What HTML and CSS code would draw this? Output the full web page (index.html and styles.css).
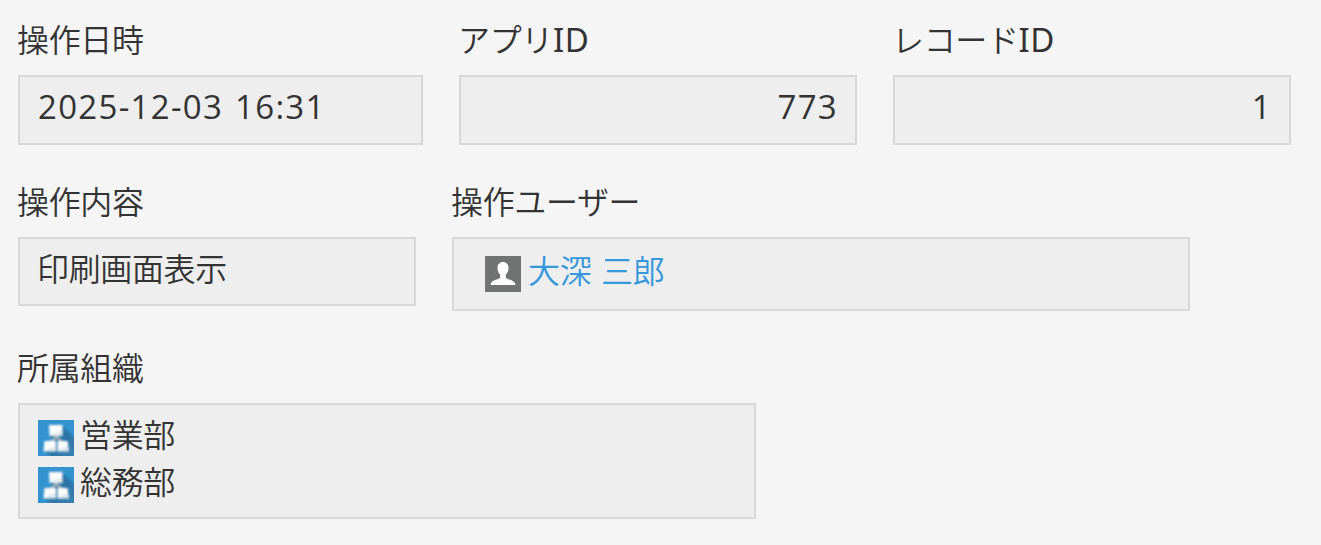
FILE: index.html
```
<!DOCTYPE html>
<html lang="ja">
<head>
  <meta charset="UTF-8">
  <meta name="viewport" content="width=device-width, initial-scale=1">
  <title>操作ログ</title>
  <link rel="stylesheet" href="styles.css">
</head>
<body>
  <svg class="defs" width="0" height="0">
    <defs>
      <linearGradient id="shade" x1="0" y1="0" x2="1" y2="1">
        <stop offset="0" stop-color="#1f6597"/>
        <stop offset="1" stop-color="#3a82b4"/>
      </linearGradient>
      <filter id="soften"><feGaussianBlur stdDeviation="0.8"/></filter>
      <symbol id="org" viewBox="0 0 36 36">
        <rect width="36" height="36" fill="#3293cf"/>
        <path d="M24 6L38 19V38H14L7 31L17 21L12 15Z" fill="url(#shade)" filter="url(#soften)"/>
        <g filter="url(#soften)">
          <path d="M17.500 15V18L12 22M18.500 17L24 22" fill="none" stroke="#a5b0b5" stroke-width="2.500"/>
          <path d="M11 5H24.500V16H11.500Z" fill="#fbfdfd"/>
          <path d="M6.500 21H18V31.500H5.500Z" fill="#fbfdfd"/>
          <path d="M19.500 21H29.500L31 31.500H19.500Z" fill="#fbfdfd"/>
          <path d="M14 14L24 11V15.500H14ZM9 29L17 26V31H9ZM22 29L30 26V31H22Z" fill="#e0e8ec"/>
        </g>
      </symbol>
    </defs>
  </svg>

  <div class="record">
    <div class="row">
      <div class="field datetime">
        <div class="label">操作日時</div>
        <div class="value"><span class="num">2025-12-03 16:31</span></div>
      </div>
      <div class="field">
        <div class="label">アプリ<span class="latin">ID</span></div>
        <div class="value right"><span class="num">773</span></div>
      </div>
      <div class="field">
        <div class="label">レコード<span class="latin">ID</span></div>
        <div class="value right"><span class="num">1</span></div>
      </div>
    </div>

    <div class="row">
      <div class="field">
        <div class="label">操作内容</div>
        <div class="value text">印刷画面表示</div>
      </div>
      <div class="field wide">
        <div class="label">操作ユーザー</div>
        <div class="value user">
          <svg class="icon" viewBox="0 0 36 36">
            <rect width="36" height="36" fill="#707372"/>
            <path d="M18 6C21.500 6 23.800 8.800 23.500 12.500C23.300 15.500 22.200 17.300 20.800 18.700V21.500C22 23.800 30 23.500 30.500 29H5.500C6 23.500 14 23.800 15.200 21.500V18.700C13.800 17.300 12.700 15.500 12.500 12.500C12.200 8.800 14.500 6 18 6Z" fill="#fff"/>
          </svg>
          <a class="user-name">大深 三郎</a>
        </div>
      </div>
    </div>

    <div class="row">
      <div class="field wide">
        <div class="label">所属組織</div>
        <div class="value orgs">
          <div class="org"><svg class="icon"><use href="#org"/></svg><span>営業部</span></div>
          <div class="org"><svg class="icon"><use href="#org"/></svg><span>総務部</span></div>
        </div>
      </div>
    </div>
  </div>
</body>
</html>
```
FILE: styles.css
```
* {
  box-sizing: border-box;
}

body {
  margin: 0;
  background: #f5f5f5;
  color: #333;
  font-family: "Noto Sans CJK JP", sans-serif;
  font-size: 32px;
  font-weight: 350;
  letter-spacing: -0.35px;
}

.defs {
  position: absolute;
}

.record {
  display: flex;
  flex-direction: column;
  gap: 33px;
  padding: 16px 18px 26px;
}

.row {
  display: flex;
  align-items: flex-start;
  gap: 36px;
}

.field {
  width: 398px;
}

.field.datetime {
  width: 405px;
}

.field.wide {
  width: 738px;
}

.label {
  height: 48px;
  line-height: 44px;
  margin-bottom: 11px;
  margin-left: -1px;
  white-space: nowrap;
}

.value {
  height: 70px;
  padding: 0 18px;
  border: 2px solid #d8d8d8;
  background: #eee;
  line-height: 57px;
  white-space: nowrap;
}

.value.right {
  padding-right: 17px;
  text-align: right;
}

.value.text {
  height: 69px;
  padding-left: 17px;
}

.latin,
.num {
  font-size: 33px;
  font-weight: 400;
  line-height: 1;
}

.latin {
  font-family: "Noto Sans", sans-serif;
  letter-spacing: 0.5px;
}

.num {
  font-family: "Open Sans", sans-serif;
  letter-spacing: 1.3px;
  word-spacing: 2px;
}

.value.user {
  display: flex;
  align-items: center;
  gap: 7px;
  height: 74px;
  padding-left: 31px;
}

.icon {
  display: block;
  flex: none;
  width: 36px;
  height: 36px;
}

.user-name {
  height: 66px;
  color: #3498db;
  line-height: 57px;
  word-spacing: 3px;
}

.value.orgs {
  display: flex;
  flex-direction: column;
  gap: 11px;
  height: 116px;
  padding-top: 15px;
}

.org {
  display: flex;
  gap: 6px;
  height: 36px;
  line-height: 27px;
}
```
